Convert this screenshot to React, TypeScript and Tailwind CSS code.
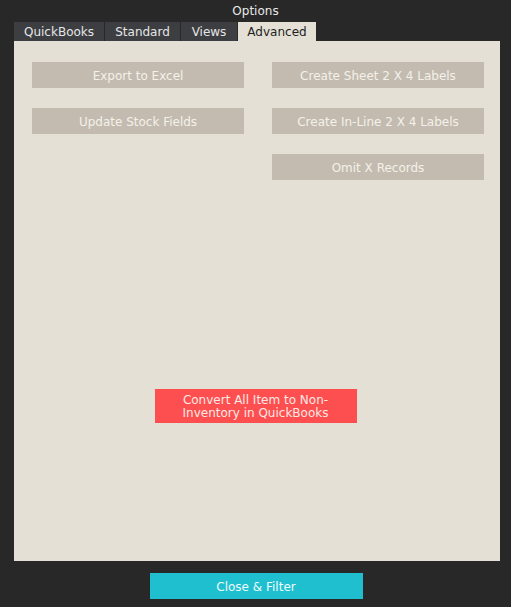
import React, { useState } from "react";

const tabs = [
  { name: "QuickBooks", w: "w-[90px]" },
  { name: "Standard", w: "w-[75px]" },
  { name: "Views", w: "w-[56px]" },
  { name: "Advanced", w: "w-[78px]" },
];

const GreyButton = ({ label }: { label: string }) => (
  <button className="h-[26px] w-[212px] bg-[#c3bbaf] pt-px text-[12px] text-[#f4f1ea]">
    {label}
  </button>
);

const App = () => {
  const [active, setActive] = useState("Advanced");

  return (
    <div
      className="flex h-[607px] w-[511px] flex-col bg-[#282828] text-[12px]"
      style={{ fontFamily: '"DejaVu Sans", Verdana, sans-serif' }}
    >
      <div className="flex h-[22px] items-center justify-center text-[#e8e8e8]">
        Options
      </div>

      {/* Tabs */}
      <div className="flex h-[19px] gap-px pl-[14px]">
        {tabs.map((tab) => (
          <button
            key={tab.name}
            onClick={() => setActive(tab.name)}
            className={`flex h-[19px] items-center justify-center pt-px ${tab.w} ${
              active === tab.name
                ? "bg-[#e4e0d6] text-[#1e1e1e]"
                : "bg-[#3d3e42] text-[#e6e6e6]"
            }`}
          >
            {tab.name}
          </button>
        ))}
      </div>

      {/* Panel */}
      <div className="ml-[14px] flex h-[520px] w-[486px] flex-col bg-[#e4e0d6]">
        <div className="flex gap-[28px] pl-[18px] pt-[21px]">
          <div className="flex flex-col gap-[20px]">
            <GreyButton label="Export to Excel" />
            <GreyButton label="Update Stock Fields" />
          </div>
          <div className="flex flex-col gap-[20px]">
            <GreyButton label="Create Sheet 2 X 4 Labels" />
            <GreyButton label="Create In-Line 2 X 4 Labels" />
            <GreyButton label="Omit X Records" />
          </div>
        </div>
        <div className="mt-[209px] flex justify-center pr-[3px]">
          <button className="h-[34px] w-[202px] bg-[#fd4f4f] px-2 pt-px leading-[13px] text-[#fde8e6]">
            Convert All Item to Non-
            <br />
            Inventory in QuickBooks
          </button>
        </div>
      </div>

      <div className="flex justify-center pl-[1px] pt-[12px]">
        <button className="h-[26px] w-[213px] bg-[#20bfcf] pt-px text-[#eefbfc]">
          Close &amp; Filter
        </button>
      </div>
    </div>
  );
};

export default App;
